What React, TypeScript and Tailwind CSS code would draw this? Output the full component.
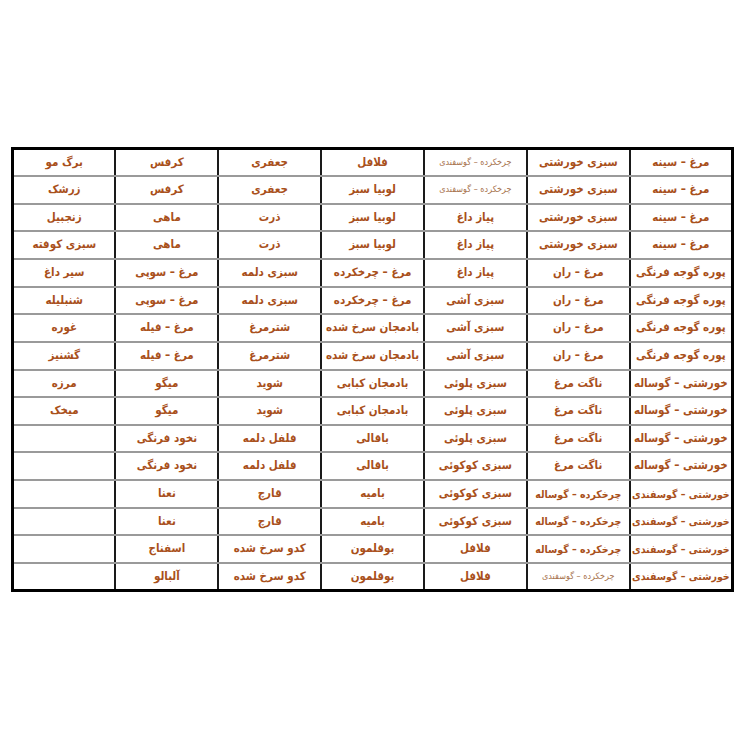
import React from "react";

const S = "§"; // marker for small light text

const rows: string[][] = [
  ["مرغ – سینه", "سبزی خورشتی", S + "چرخکرده – گوسفندی", "فلافل", "جعفری", "کرفس", "برگ مو"],
  ["مرغ – سینه", "سبزی خورشتی", S + "چرخکرده – گوسفندی", "لوبیا سبز", "جعفری", "کرفس", "زرشک"],
  ["مرغ – سینه", "سبزی خورشتی", "پیاز داغ", "لوبیا سبز", "ذرت", "ماهی", "زنجبیل"],
  ["مرغ – سینه", "سبزی خورشتی", "پیاز داغ", "لوبیا سبز", "ذرت", "ماهی", "سبزی کوفته"],
  ["پوره گوجه فرنگی", "مرغ – ران", "پیاز داغ", "مرغ – چرخکرده", "سبزی دلمه", "مرغ – سوپی", "سیر داغ"],
  ["پوره گوجه فرنگی", "مرغ – ران", "سبزی آشی", "مرغ – چرخکرده", "سبزی دلمه", "مرغ – سوپی", "شنبلیله"],
  ["پوره گوجه فرنگی", "مرغ – ران", "سبزی آشی", "بادمجان سرخ شده", "شترمرغ", "مرغ – فیله", "غوره"],
  ["پوره گوجه فرنگی", "مرغ – ران", "سبزی آشی", "بادمجان سرخ شده", "شترمرغ", "مرغ – فیله", "گشنیز"],
  ["خورشتی – گوساله", "ناگت مرغ", "سبزی پلوئی", "بادمجان کبابی", "شوید", "میگو", "مرزه"],
  ["خورشتی – گوساله", "ناگت مرغ", "سبزی پلوئی", "بادمجان کبابی", "شوید", "میگو", "میخک"],
  ["خورشتی – گوساله", "ناگت مرغ", "سبزی پلوئی", "باقالی", "فلفل دلمه", "نخود فرنگی", ""],
  ["خورشتی – گوساله", "ناگت مرغ", "سبزی کوکوئی", "باقالی", "فلفل دلمه", "نخود فرنگی", ""],
  ["خورشتی – گوسفندی", "چرخکرده – گوساله", "سبزی کوکوئی", "بامیه", "قارچ", "نعنا", ""],
  ["خورشتی – گوسفندی", "چرخکرده – گوساله", "سبزی کوکوئی", "بامیه", "قارچ", "نعنا", ""],
  ["خورشتی – گوسفندی", "چرخکرده – گوساله", "فلافل", "بوقلمون", "کدو سرخ شده", "اسفناج", ""],
  ["خورشتی – گوسفندی", S + "چرخکرده – گوسفندی", "فلافل", "بوقلمون", "کدو سرخ شده", "آلبالو", ""],
];

export default function App() {
  return (
    <div className="w-[750px] h-[750px] bg-white pt-[147px] pl-[11px]">
      <table
        dir="rtl"
        className="w-[723px] h-[445px] table-fixed border-collapse border-[3px] border-black"
        style={{ fontFamily: '"DejaVu Sans Condensed", "DejaVu Sans", sans-serif' }}
      >
        <tbody>
          {rows.map((r, i) => (
            <tr key={i} className="h-[27.6px]">
              {r.map((c, j) => {
                const small = c.startsWith(S);
                const text = small ? c.slice(1) : c;
                const long = !small && text.length >= 16;
                return (
                  <td
                    key={j}
                    className={
                      "border-x-2 border-x-[#1a1a1a] border-y-2 border-y-[#9a9a9a] text-center whitespace-nowrap p-0 leading-none " +
                      (small
                        ? "text-[9px] font-normal text-[#a8744f]"
                        : long
                        ? "text-[10.5px] font-bold text-[#a9501b]"
                        : "text-[11.5px] font-bold text-[#a9501b]")
                    }
                  >
                    {text}
                  </td>
                );
              })}
            </tr>
          ))}
        </tbody>
      </table>
    </div>
  );
}
